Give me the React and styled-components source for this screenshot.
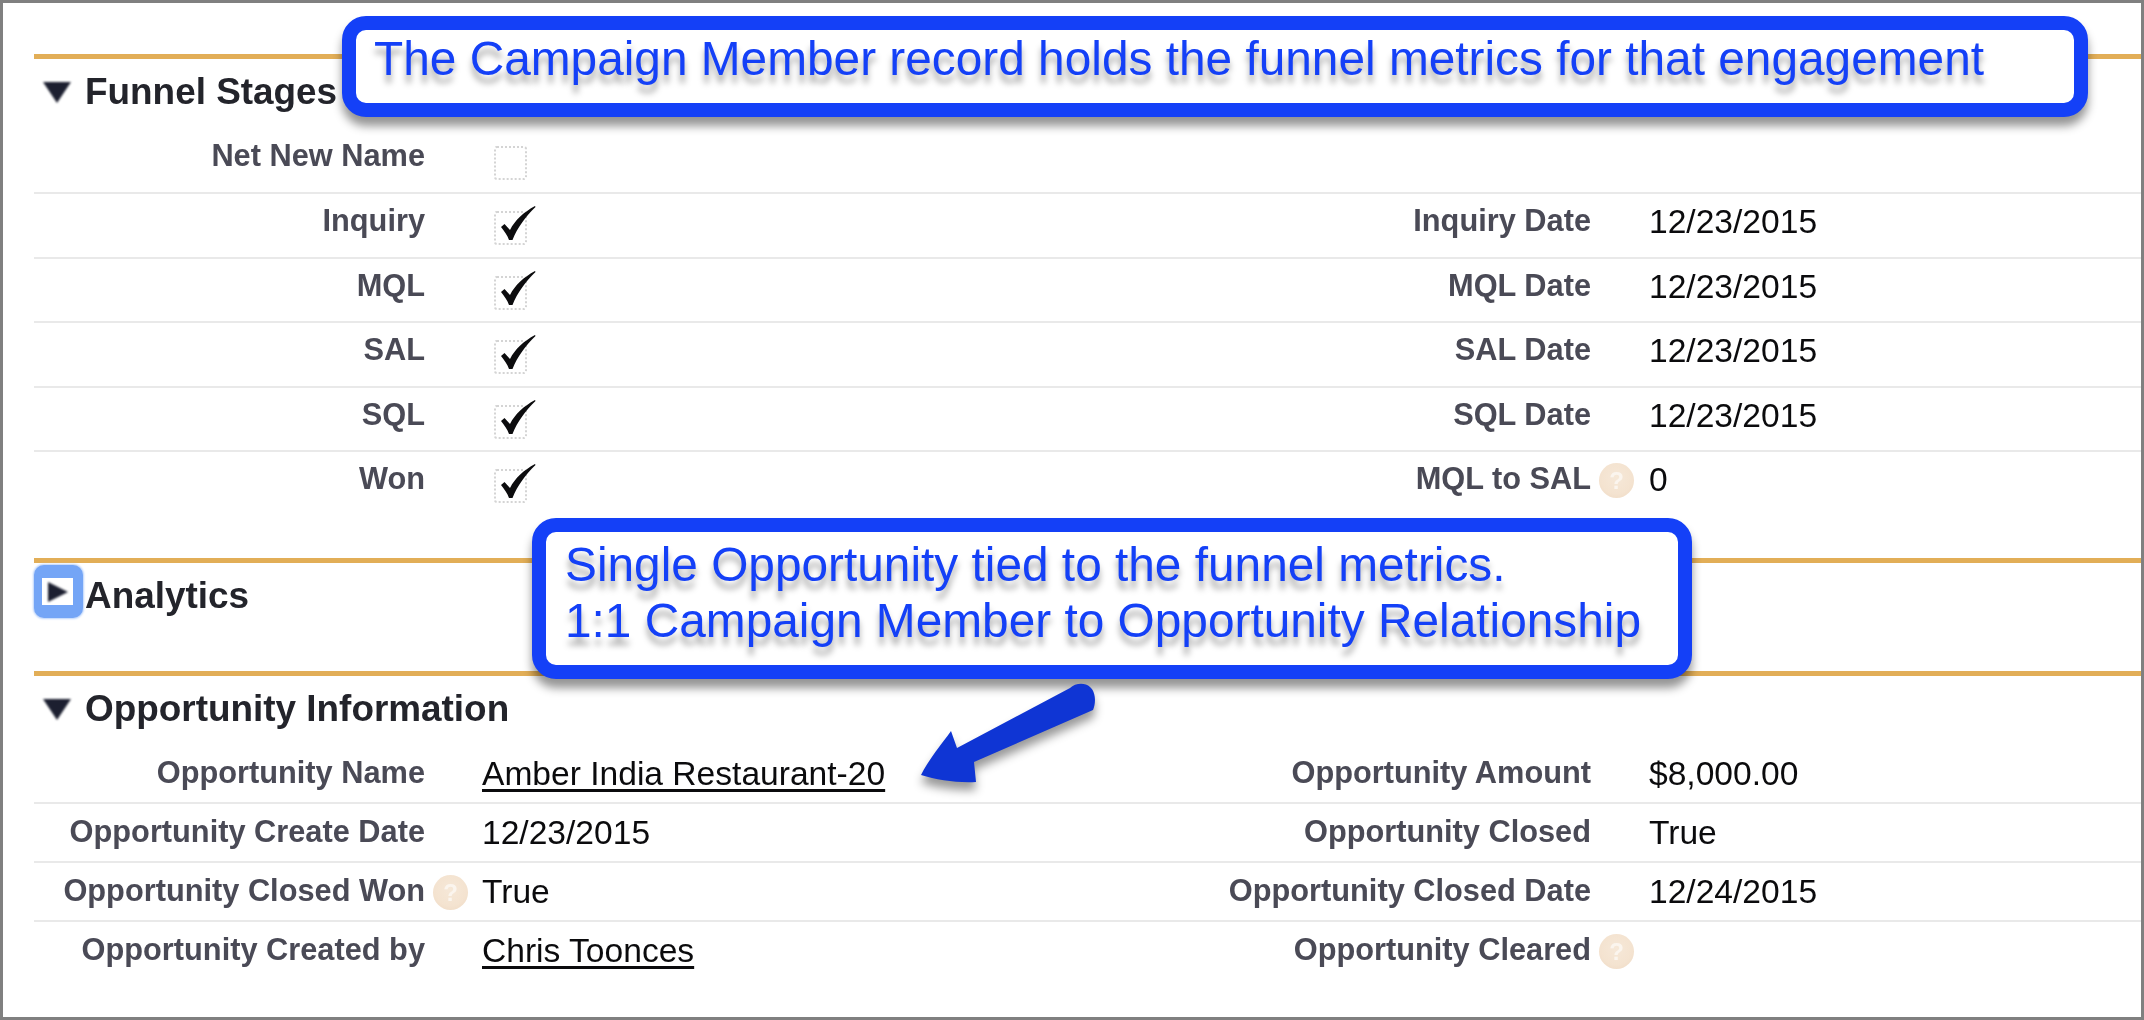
import styled, { createGlobalStyle } from "styled-components";

const GlobalStyle = createGlobalStyle`
    html, body {
        margin: 0;
        background: #fff;
    }
`;

const Frame = styled.div`
    position: relative;
    box-sizing: border-box;
    width: 2144px;
    height: 1020px;
    overflow: hidden;
    padding: 51px 0 0 31px;
    border: 3px solid #808080;
    background: #fff;
    font-family: "Liberation Sans", Arial, sans-serif;
    filter: blur(0.55px);
`;

const Section = styled.section`
    border-top: 5px solid #e2ae57;
    padding-bottom: ${(p) => p.$bottom || 0}px;
`;

const Heading = styled.div`
    display: flex;
    align-items: center;
    height: ${(p) => p.$height}px;
    padding-bottom: ${(p) => p.$pad || 0}px;
    box-sizing: border-box;
`;

const Toggle = styled.span`
    display: flex;
    flex: none;
    align-items: center;
    justify-content: center;
    width: 51px;
    padding-right: 7px;
    box-sizing: border-box;
`;

const FocusToggle = styled.span`
    display: flex;
    flex: none;
    align-items: center;
    justify-content: center;
    box-sizing: border-box;
    width: 49px;
    height: 53px;
    margin: -9px 2px 0 0;
    border-style: solid;
    border-color: #74a5f6;
    border-width: 13px 10px 13px 8px;
    border-radius: 10px;
    box-shadow: 0 0 2px 1px #b9d2fb;
    background: #fff;
`;

const Title = styled.h3`
    margin: 0;
    font-size: 36.9px;
    line-height: 42px;
    font-weight: 700;
    color: #23242b;
`;

const Row = styled.div`
    display: grid;
    grid-template-columns: 391px 57px 668px 441px 58px 1fr;
    box-sizing: border-box;
    height: ${(p) => p.$height}px;
    padding-top: ${(p) => p.$top}px;
    border-bottom: ${(p) => (p.$last ? "0" : "2px solid #e9e9e9")};
`;

const Label = styled.div`
    margin-top: 1px;
    text-align: right;
    font-size: 30.75px;
    line-height: 36px;
    font-weight: 700;
    color: #4a4a56;
    white-space: nowrap;
`;

const Gutter = styled.div`
    padding: 3px 0 0 8px;
`;

const Value = styled.div`
    margin-top: 2px;
    font-size: 33.6px;
    line-height: 36px;
    color: #0b0b0d;
    white-space: nowrap;
`;

const LinkText = styled.a`
    color: #0b0b0d;
    text-decoration: underline;
    text-decoration-thickness: 3px;
    text-underline-offset: 4px;
`;

const CheckBox = styled.div`
    position: relative;
    box-sizing: border-box;
    width: 33px;
    height: 34px;
    margin: 9px 0 0 12px;
    border: 2px dotted #d4d4d4;
    border-radius: 3px;
`;

const CheckMark = styled.svg`
    position: absolute;
    left: 4px;
    top: -7px;
    width: 36px;
    height: 35px;
`;

const Help = styled.span`
    display: flex;
    align-items: center;
    justify-content: center;
    width: 35px;
    height: 35px;
    border-radius: 50%;
    background: radial-gradient(circle at 50% 42%, #f6e8d8 0%, #f4e3d0 60%, #f0dcc7 85%, #f8efe6 100%);
    color: #fbf5ee;
    font-size: 24px;
    font-weight: 700;
    line-height: 1;
`;

const Callout = styled.div`
    position: absolute;
    box-sizing: border-box;
    left: ${(p) => p.$left}px;
    top: ${(p) => p.$top}px;
    width: ${(p) => p.$width}px;
    height: ${(p) => p.$height}px;
    padding: ${(p) => p.$pad};
    border: 14.5px solid #1440f7;
    border-radius: 24px;
    background: #fff;
    box-shadow: 0 9px 10px rgba(0, 0, 0, 0.42);
    color: #1440f7;
    font-size: ${(p) => p.$size}px;
    line-height: ${(p) => p.$line}px;
    white-space: nowrap;
    text-shadow: 0 8px 6px rgba(0, 0, 0, 0.35);
`;

const Arrow = styled.svg`
    position: absolute;
    left: 902px;
    top: 676px;
    width: 210px;
    height: 130px;
    overflow: visible;
    filter: drop-shadow(0 8px 5px rgba(0, 0, 0, 0.4));
`;

const Triangle = ({ right }) => (
    <svg width="30" height="24" viewBox="0 0 30 24" style={{ filter: "blur(1px)" }}>
        {right ? (
            <polygon points="5,2 25,12 5,22" fill="#1c1f30" />
        ) : (
            <polygon points="2,2 30,2 16,23" fill="#1c1f30" />
        )}
    </svg>
);

const Check = () => (
    <CheckMark viewBox="0 0 36 35">
        <path d="M1 21 L4.5 18 L10 24 C15 14 24 6 35 0 L35.5 1 C26 10 17 22 12.5 34 L9 34 C7.5 29 4 25 1 21 Z" fill="#0c0c0e" />
    </CheckMark>
);

const funnelRows = [
    { label: "Inquiry", right: "Inquiry Date", date: "12/23/2015" },
    { label: "MQL", right: "MQL Date", date: "12/23/2015" },
    { label: "SAL", right: "SAL Date", date: "12/23/2015" },
    { label: "SQL", right: "SQL Date", date: "12/23/2015" },
    { label: "Won", right: "MQL to SAL", date: "0", help: true },
];

const oppRows = [
    { label: "Opportunity Name", value: "Amber India Restaurant-20", link: true, right: "Opportunity Amount", rightValue: "$8,000.00" },
    { label: "Opportunity Create Date", value: "12/23/2015", right: "Opportunity Closed", rightValue: "True" },
    { label: "Opportunity Closed Won", help: true, value: "True", right: "Opportunity Closed Date", rightValue: "12/24/2015" },
    { label: "Opportunity Created by", value: "Chris Toonces", link: true, right: "Opportunity Cleared", rightHelp: true },
];

export default function App() {
    return (
        <>
            <GlobalStyle />
            <Frame>
                <Section $bottom={41.5}>
                    <Heading $height={70} $pad={4}>
                        <Toggle><Triangle /></Toggle>
                        <Title>Funnel Stages</Title>
                    </Heading>
                    <Row $height={65} $top={8}>
                        <Label>Net New Name</Label>
                        <Gutter />
                        <CheckBox />
                    </Row>
                    {funnelRows.map((r, i) => (
                        <Row key={r.label} $height={64.5} $top={8} $last={i === funnelRows.length - 1}>
                            <Label>{r.label}</Label>
                            <Gutter />
                            <CheckBox><Check /></CheckBox>
                            <Label>{r.right}</Label>
                            <Gutter>{r.help && <Help>?</Help>}</Gutter>
                            <Value>{r.date}</Value>
                        </Row>
                    ))}
                </Section>
                <Section $bottom={42}>
                    <Heading $height={66}>
                        <FocusToggle><Triangle right /></FocusToggle>
                        <Title>Analytics</Title>
                    </Heading>
                </Section>
                <Section>
                    <Heading $height={69} $pad={4}>
                        <Toggle><Triangle /></Toggle>
                        <Title>Opportunity Information</Title>
                    </Heading>
                    {oppRows.map((r, i) => (
                        <Row key={r.label} $height={59} $top={9} $last={i === oppRows.length - 1}>
                            <Label>{r.label}</Label>
                            <Gutter>{r.help && <Help>?</Help>}</Gutter>
                            <Value>{r.link ? <LinkText>{r.value}</LinkText> : r.value}</Value>
                            <Label>{r.right}</Label>
                            <Gutter>{r.rightHelp && <Help>?</Help>}</Gutter>
                            <Value>{r.rightValue}</Value>
                        </Row>
                    ))}
                </Section>

                <Callout $left={339} $top={13} $width={1746} $height={101} $size={47.8} $line={57} $pad="0 0 0 18px">
                    The Campaign Member record holds the funnel metrics for that engagement
                </Callout>
                <Callout $left={529} $top={515} $width={1160} $height={161} $size={47.8} $line={56} $pad="5px 0 0 19px">
                    Single Opportunity tied to the funnel metrics.
                    <br />
                    1:1 Campaign Member to Opportunity Relationship
                </Callout>
                <Arrow viewBox="0 0 210 130">
                    <path
                        d="M165 9 C170 4 180 3 185 8 C191 13 191 24 188 31 L69 83 L71 103 C52 104 32 101 16 96 C24 80 36 66 46 52 L52 69 Z"
                        fill="#0f35d4"
                    />
                </Arrow>
            </Frame>
        </>
    );
}
